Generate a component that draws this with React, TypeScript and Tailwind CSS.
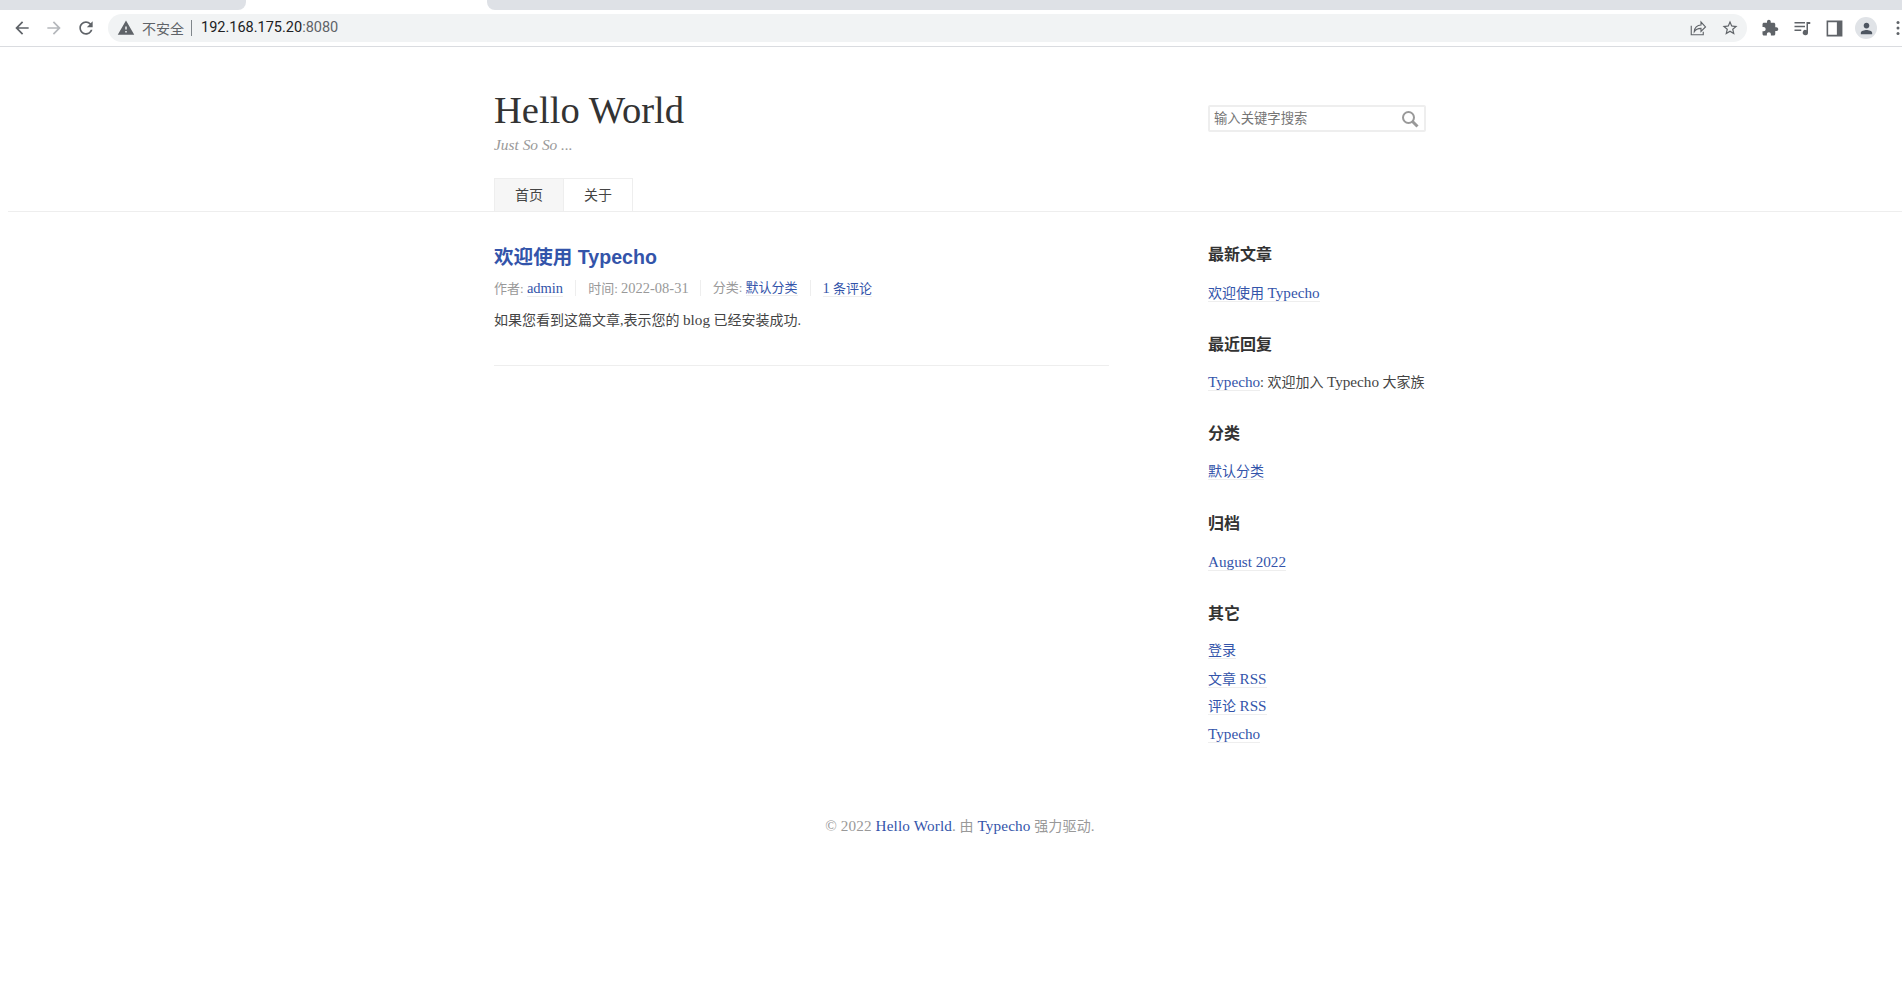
import React from "react";

const serif = "font-['Liberation_Serif','Noto_Sans_CJK_SC',serif]";

function E({ children }: { children: React.ReactNode }) {
  return <span className="text-[15.2px]">{children}</span>;
}

function Ico({ d, className = "", fill = "#5f6368", size = 20 }: { d: string; className?: string; fill?: string; size?: number }) {
  return (
    <svg viewBox="0 0 24 24" width={size} height={size} className={className} fill={fill}>
      <path d={d} />
    </svg>
  );
}

function Slot({ children }: { children: React.ReactNode }) {
  return <div className="w-[32px] h-[32px] shrink-0 flex items-center justify-center">{children}</div>;
}

function Chrome() {
  return (
    <div className="w-[1902px] overflow-hidden">
      <div className="h-[10px] flex">
        <div className="w-[246px] bg-[#dee1e6] rounded-br-[8px]" />
        <div className="w-[241px] bg-white" />
        <div className="flex-1 bg-[#dee1e6] rounded-bl-[8px]" />
      </div>
      <div className="h-[37px] border-b border-[#dadce0] bg-white flex items-center pl-[6px]">
        <Slot><Ico d="M20 11H7.83l5.59-5.59L12 4l-8 8 8 8 1.41-1.41L7.83 13H20v-2z" /></Slot>
        <Slot><Ico fill="#b5b8bc" d="M4 11h12.17l-5.59-5.59L12 4l8 8-8 8-1.41-1.41L16.17 13H4v-2z" /></Slot>
        <Slot><Ico d="M17.65 6.35C16.2 4.9 14.21 4 12 4c-4.42 0-7.99 3.58-7.99 8s3.57 8 7.99 8c3.73 0 6.84-2.55 7.73-6h-2.08c-.82 2.33-3.04 4-5.65 4-3.31 0-6-2.69-6-6s2.69-6 6-6c1.66 0 3.14.69 4.22 1.78L13 11h7V4l-2.35 2.35z" /></Slot>
        <div className="ml-[6px] w-[1639px] h-[28px] shrink-0 rounded-full bg-[#f1f3f4] flex items-center pl-[9px] pr-[8px]">
          <Ico size={18} d="M1 21h22L12 2 1 21zm12-3h-2v-2h2v2zm0-4h-2v-4h2v4z" />
          <span className="ml-[7px] pb-[1px] text-[14px] leading-[20px] text-[#5f6368] font-['Noto_Sans_CJK_SC',sans-serif]">不安全</span>
          <span className="ml-[7px] w-[1px] h-[16px] bg-[#80868b]" />
          <span className="ml-[9px] text-[14.5px] leading-[20px] text-[#202124] font-['Roboto',sans-serif]">
            192.168.175.20<span className="text-[#5f6368]">:8080</span>
          </span>
          <div className="ml-auto flex items-center gap-[14px]">
            <svg viewBox="0 0 24 24" width="18" height="18" fill="none" stroke="#5f6368" strokeWidth="1.5">
              <path d="M3 9v12h16v-4" />
              <path d="M7 17c0-5 4-9 9-9V4l6 6.5-6 6v-4c-4 0-7 1-9 4.500z" />
            </svg>
            <Ico size={18} d="M22 9.24l-7.19-.62L12 2 9.19 8.63 2 9.24l5.46 4.73L5.82 21 12 17.27 18.18 21l-1.63-7.03L22 9.24zM12 15.4l-3.76 2.27 1-4.28-3.32-2.88 4.38-.38L12 6.1l1.71 4.04 4.38.38-3.32 2.88 1 4.28L12 15.4z" />
          </div>
        </div>
        <div className="ml-[7px] flex items-center shrink-0">
          <Slot><Ico size={18} d="M20.5 11H19V7c0-1.1-.9-2-2-2h-4V3.5C13 2.12 11.88 1 10.5 1S8 2.12 8 3.5V5H4c-1.1 0-1.99.9-1.99 2v3.8H3.5c1.49 0 2.7 1.21 2.7 2.7s-1.21 2.7-2.7 2.7H2V20c0 1.1.9 2 2 2h3.8v-1.5c0-1.49 1.21-2.7 2.7-2.7 1.49 0 2.7 1.21 2.7 2.7V22H17c1.1 0 2-.9 2-2v-4h1.500c1.38 0 2.5-1.12 2.5-2.5S21.88 11 20.5 11z" /></Slot>
          <Slot>
            <svg viewBox="0 0 24 24" width="18" height="18" fill="#5f6368">
              <path d="M2 4h14v2H2zM2 9h14v2H2zM2 14h9v2H2z" />
              <path d="M18 4h5v2.500h-3V18a3.500 3.500 0 1 1-2-3.100z" />
            </svg>
          </Slot>
          <Slot>
            <svg viewBox="0 0 24 24" width="19" height="19" fill="#5f6368">
              <path fillRule="evenodd" d="M2 2h20v20H2zM4 4v16h11V4z" />
            </svg>
          </Slot>
          <Slot>
            <div className="w-[22px] h-[22px] rounded-full bg-[#e0e3e7] flex items-center justify-center">
              <Ico size={17} fill="#4e5661" d="M12 12c2.21 0 4-1.79 4-4s-1.79-4-4-4-4 1.790-4 4 1.790 4 4 4zm0 2c-2.670 0-8 1.340-8 4v2h16v-2c0-2.660-5.330-4-8-4z" />
            </div>
          </Slot>
          <Slot>
            <svg viewBox="0 0 24 24" width="20" height="20" fill="#5f6368">
              <circle cx="12" cy="5.500" r="1.800" />
              <circle cx="12" cy="12" r="1.800" />
              <circle cx="12" cy="18.500" r="1.800" />
            </svg>
          </Slot>
        </div>
      </div>
    </div>
  );
}

function A({ children, className = "" }: { children: React.ReactNode; className?: string }) {
  return <a href="#" className={`text-[#3354aa] border-b border-[#eee] ${className}`}>{children}</a>;
}

function Widget({ title, children }: { title: string; children: React.ReactNode }) {
  return (
    <section className="mb-[26.6px]">
      <h3 className="h-[24px] leading-[24px] text-[16px] font-bold text-[#333] mb-[11.7px]">{title}</h3>
      <ul>{children}</ul>
    </section>
  );
}

function Li({ children }: { children: React.ReactNode }) {
  return <li className="h-[27.4px] leading-[27.4px] text-[14px] text-[#444] whitespace-nowrap">{children}</li>;
}

function MetaItem({ children, last, pad = "pr-[11px]" }: { children: React.ReactNode; last?: boolean; pad?: string }) {
  return (
    <li className={`h-[16px] leading-[16px] whitespace-nowrap ${last ? "" : `border-r border-[#eee] ${pad} mr-[12px]`}`}>
      {children}
    </li>
  );
}

function M({ children }: { children: React.ReactNode }) {
  return <span className="text-[14.5px]">{children}</span>;
}

export default function App() {
  return (
    <div className={`w-[1902px] h-[995px] overflow-hidden bg-white ${serif}`}>
      <Chrome />
      <div className="w-[1920px] px-[8px]">
        <header className="border-b border-[#eee]">
          <div className="w-[952px] mx-auto flex">
            <div className="flex-1 px-[10px] pt-[41px]">
              <h1 className="text-[38.6px] leading-[44px] text-[#333]">Hello World</h1>
              <p className="mt-[2px] text-[15.4px] leading-[22px] italic text-[#999]">Just So So ...</p>
              <nav className="mt-[22px] flex h-[33px] w-fit border-t border-x border-[#eee] text-[14px] text-[#444]">
                <a href="#" className="w-[69px] flex items-center justify-center bg-[#f6f6f6] border-r border-[#eee]">首页</a>
                <a href="#" className="w-[68px] flex items-center justify-center">关于</a>
              </nav>
            </div>
            <div className="w-[238px] px-[10px] pt-[58px]">
              <div className="relative">
                <input
                  placeholder="输入关键字搜索"
                  className="w-[218px] h-[27px] border-2 border-[#eee] rounded-[2px] pl-[4px] pr-[28px] pb-[2px] text-[13.33px] outline-none font-['Noto_Sans_CJK_SC',sans-serif] placeholder:text-[#757575]"
                />
                <svg viewBox="0 0 18 18" width="18" height="18" fill="none" stroke="#999" className="absolute right-[7px] top-[5px]">
                  <circle cx="7.500" cy="7.500" r="5.500" strokeWidth="2" />
                  <path d="M11.500 11.500L16.500 16.500" strokeWidth="3" />
                </svg>
              </div>
            </div>
          </div>
        </header>

        <div className="w-[952px] mx-auto flex">
          <main className="w-[635px] px-[10px] pt-[30px]">
            <article className="border-b border-[#eee] pb-[35px]">
              <h2 className="h-[30px] leading-[30px] text-[19.6px] font-bold text-[#3354aa] font-['Liberation_Sans','Noto_Sans_CJK_SC',sans-serif]">
                欢迎使用 Typecho
              </h2>
              <ul className="mt-[8px] flex text-[13px] text-[#999]">
                <MetaItem pad="pr-[12px]">作者: <A><M>admin</M></A></MetaItem>
                <MetaItem>时间: <M>2022-08-31</M></MetaItem>
                <MetaItem pad="pr-[12px]">分类: <A>默认分类</A></MetaItem>
                <MetaItem last><A><M>1</M> 条评论</A></MetaItem>
              </ul>
              <p className="mt-[14px] h-[20px] leading-[20px] text-[14px] text-[#444]">
                如果您看到这篇文章,表示您的 <E>blog</E> 已经安装成功.
              </p>
            </article>
          </main>
          <aside className="ml-[89px] w-[218px] pt-[31px]">
            <Widget title="最新文章"><Li><A>欢迎使用 <E>Typecho</E></A></Li></Widget>
            <Widget title="最近回复"><Li><A><E>Typecho</E></A>: 欢迎加入 <E>Typecho</E> 大家族</Li></Widget>
            <Widget title="分类"><Li><A>默认分类</A></Li></Widget>
            <Widget title="归档"><Li><A><E>August 2022</E></A></Li></Widget>
            <Widget title="其它">
              <Li><A>登录</A></Li>
              <Li><A>文章 <E>RSS</E></A></Li>
              <Li><A>评论 <E>RSS</E></A></Li>
              <Li><A><E>Typecho</E></A></Li>
            </Widget>
          </aside>
        </div>

        <footer className="mt-[42.5px] h-[20px] leading-[20px] text-center text-[14px] tracking-[0.15px] text-[#999]">
          <E>© 2022</E> <a href="#" className="text-[#3354aa]"><E>Hello World</E></a><E>.</E> 由 <a href="#" className="text-[#3354aa]"><E>Typecho</E></a> 强力驱动<E>.</E>
        </footer>
      </div>
    </div>
  );
}
